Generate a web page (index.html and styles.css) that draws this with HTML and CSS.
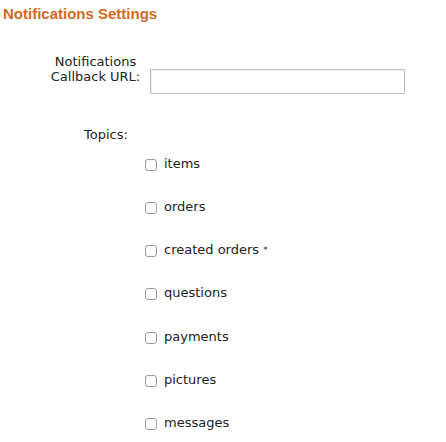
FILE: index.html
```html
<!DOCTYPE html>
<html lang="en">
<head>
    <meta charset="UTF-8" />
    <title>Notifications Settings</title>
    <link rel="stylesheet" href="styles.css">
</head>
<body>
    <h2 class="section-title">Notifications Settings</h2>

    <div class="settings-row">
        <label class="settings-label" for="callback">Notifications Callback URL:</label>
        <input type="text" id="callback" class="settings-input" />
    </div>

    <div class="topics-label">Topics:</div>

    <ul class="topics-list">
        <li><input type="checkbox" id="t-items" /><label for="t-items">items</label></li>
        <li><input type="checkbox" id="t-orders" /><label for="t-orders">orders</label></li>
        <li><input type="checkbox" id="t-created" /><label for="t-created">created orders <span class="star">*</span></label></li>
        <li><input type="checkbox" id="t-questions" /><label for="t-questions">questions</label></li>
        <li><input type="checkbox" id="t-payments" /><label for="t-payments">payments</label></li>
        <li><input type="checkbox" id="t-pictures" /><label for="t-pictures">pictures</label></li>
        <li><input type="checkbox" id="t-messages" /><label for="t-messages">messages</label></li>
    </ul>
</body>
</html>
```

FILE: styles.css
```css
body {
    font-family: "DejaVu Sans", Verdana, sans-serif;
    font-size: 13px;
    line-height: 15px;
    color: #222;
    background: #fff;
    margin: 0;
    padding: 5px 0 0 3px;
}

.section-title {
    font-family: "Liberation Sans", Arial, sans-serif;
    color: #d2691e;
    font-size: 15px;
    line-height: 17px;
    font-weight: bold;
    margin: 0;
}

.settings-row {
    display: flex;
    align-items: flex-start;
    margin-top: 32px;
}

.settings-label {
    width: 101px;
    margin-left: 42px;
    text-align: center;
}

.settings-input {
    width: 255px;
    height: 25px;
    margin: 15px 0 0 4px;
    border: 1px solid #bfbfbf;
    box-shadow: inset 1px 1px 1px #ececec;
    box-sizing: border-box;
    font-size: 13px;
}

.topics-label {
    margin-top: 33px;
    padding-left: 81px;
}

.topics-list {
    list-style: none;
    margin: 14px 0 0 0;
    padding-left: 142px;
}

.topics-list li {
    height: 43.17px;
    display: flex;
    align-items: flex-start;
}

.topics-list input {
    appearance: none;
    width: 12px;
    height: 12px;
    margin: 3px 7px 0 0;
    border: 1px solid #9a9a9a;
    border-radius: 3px;
    background: #fff;
    box-sizing: border-box;
}

.star {
    font-size: 9px;
    vertical-align: 1px;
}
```
